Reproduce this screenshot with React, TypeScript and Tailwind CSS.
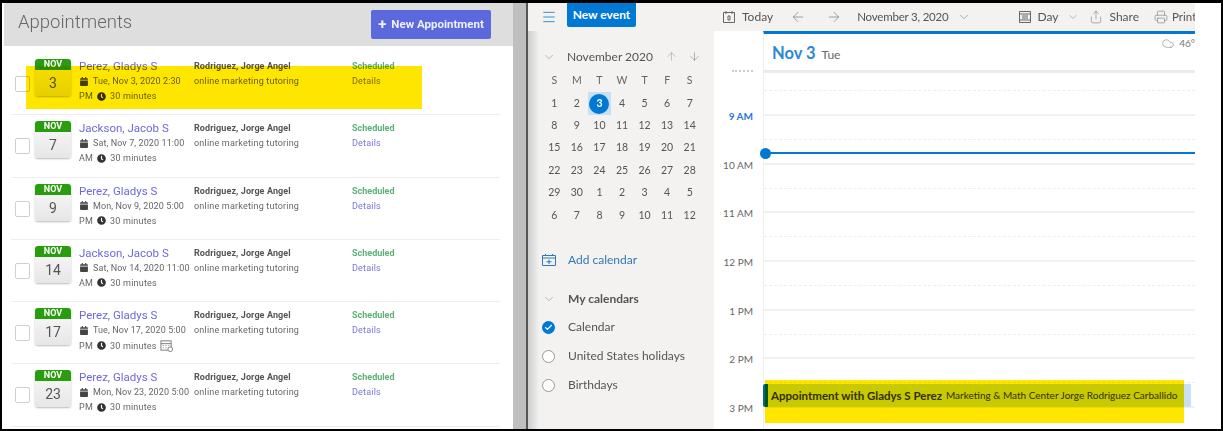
import { ArrowDown, ArrowLeft, ArrowRight, ArrowUp, Check, ChevronDown, Cloud, Menu, Printer, Share } from "lucide-react";
import { FaCalendar, FaClock } from "react-icons/fa";

const appointments = [
  { day: "3", name: "Perez, Gladys S", date: "Tue, Nov 3, 2020 2:30", ampm: "PM" },
  { day: "7", name: "Jackson, Jacob S", date: "Sat, Nov 7, 2020 11:00", ampm: "AM" },
  { day: "9", name: "Perez, Gladys S", date: "Mon, Nov 9, 2020 5:00", ampm: "PM" },
  { day: "14", name: "Jackson, Jacob S", date: "Sat, Nov 14, 2020 11:00", ampm: "AM" },
  { day: "17", name: "Perez, Gladys S", date: "Tue, Nov 17, 2020 5:00", ampm: "PM", extra: true },
  { day: "23", name: "Perez, Gladys S", date: "Mon, Nov 23, 2020 5:00", ampm: "PM" },
];

const weekDays = ["S", "M", "T", "W", "T", "F", "S"];
const monthDays = [
  1, 2, 3, 4, 5, 6, 7, 8, 9, 10, 11, 12, 13, 14, 15, 16, 17, 18, 19, 20, 21, 22, 23, 24, 25, 26, 27, 28, 29, 30, 1, 2, 3,
  4, 5, 6, 7, 8, 9, 10, 11, 12,
];
const hours = ["9 AM", "10 AM", "11 AM", "12 PM", "1 PM", "2 PM", "3 PM"];

function AppointmentRow({ a }: { a: (typeof appointments)[number] }) {
  return (
    <div className="mr-[13px] ml-[9px] flex h-[62.3px] border-b border-[#eeeeee] pt-[6px] text-[#666]">
      <div className="ml-[4px] mt-[17px] h-[16px] w-[15px] shrink-0 rounded-[2px] border border-[#cfcfcf] bg-white" />
      <div className="ml-[5px] h-[37px] w-[36px] shrink-0 overflow-hidden rounded-[3px] bg-gradient-to-b from-[#fafafa] to-[#e6e6e6] text-center shadow-[0_1px_2px_#bbb]">
        <div className="h-[11px] bg-[#2a9d0f] text-[9px] leading-[10px] font-bold text-white">NOV</div>
        <div className="mt-[4px] text-[14px] leading-[18px] text-[#555]">{a.day}</div>
      </div>
      <div className="ml-[8px] w-[115px] shrink-0">
        <div className="text-[11.500px] leading-[14px] text-[#6e68dc]">{a.name}</div>
        <div className="mt-[2px] flex items-center text-[9px] leading-[12px] tracking-[0.1px] whitespace-nowrap">
          <FaCalendar className="mr-[5px] ml-[1px] h-[9px] w-[8px] shrink-0 text-[#444]" />
          {a.date}
        </div>
        <div className="mt-[3px] flex items-center text-[9px] leading-[12px] tracking-[0.2px]">
          {a.ampm}
          <FaClock className="mx-[4px] h-[9px] w-[9px] text-[#333]" />
          30 minutes
          {a.extra && (
            <svg viewBox="0 0 14 14" className="ml-[3px] h-[13px] w-[13px] text-[#777]" fill="none" stroke="currentColor">
              <rect x="1" y="2" width="11" height="10" />
              <path d="M1 5h11M3 7h1M6 7h1M9 7h1M3 9.500h1M6 9.500h1" />
              <circle cx="11" cy="11" r="2.500" fill="#fff" />
            </svg>
          )}
        </div>
      </div>
      <div className="w-[158px] shrink-0">
        <div className="mt-[1px] text-[9px] leading-[12px] font-bold tracking-[0.1px] text-[#555]">Rodriguez, Jorge Angel</div>
        <div className="mt-[3px] text-[9px] leading-[12px] tracking-[0.2px]">online marketing tutoring</div>
      </div>
      <div>
        <div className="mt-[1px] text-[9px] leading-[12px] font-bold text-[#5cb078]">Scheduled</div>
        <div className="mt-[3px] text-[9px] leading-[12px] tracking-[0.2px] text-[#7a74dc]">Details</div>
      </div>
    </div>
  );
}

function AppointmentsPanel() {
  return (
    <div className="relative h-full w-[511px] shrink-0 bg-white font-['Roboto',sans-serif]">
      <div className="ml-[2px] flex h-[43px] items-center justify-between bg-[#dedede] pr-[22px] pl-[14px]">
        <span className="-translate-y-[2px] text-[18.500px] font-light text-[#666]">Appointments</span>
        <button className="flex h-[29px] w-[120px] items-center justify-center gap-[5px] rounded-[2px] bg-[#5b69dc] text-[11.500px] font-bold text-[#eef0ff]">
          <span className="text-[15px] leading-none">+</span>
          New Appointment
        </button>
      </div>
      <div className="pt-[7px]">
        {appointments.map((a) => (
          <AppointmentRow key={a.day} a={a} />
        ))}
      </div>
      <div className="absolute top-[63px] left-[24px] h-[43px] w-[396px] bg-[#ffe600] mix-blend-multiply" />
    </div>
  );
}

function Toolbar() {
  return (
    <div className="flex h-[28px] w-[667px] shrink-0 items-center bg-[#f3f2f1] text-[12px] text-[#555]">
      <Menu className="ml-[13px] h-[16px] w-[16px] shrink-0 text-[#0078d4]" strokeWidth={1.2} />
      <div className="ml-[10px] flex h-[24px] w-[69px] shrink-0 -translate-y-[2px] items-center justify-center rounded-b-[2px] bg-[#0078d4] font-bold text-white">
        New event
      </div>
      <div className="ml-[86px] flex shrink-0 items-center gap-[6px]">
        <svg viewBox="0 0 14 14" className="h-[14px] w-[14px] text-[#666]" fill="none" stroke="currentColor">
          <path d="M1.500 2.500h11v10h-11zM4 1v3M10 1v3M6 6h2v4H6z" />
        </svg>
        Today
      </div>
      <ArrowLeft className="ml-[17px] h-[16px] w-[16px] shrink-0 text-[#777]" strokeWidth={1} />
      <ArrowRight className="ml-[20px] h-[16px] w-[16px] shrink-0 text-[#777]" strokeWidth={1} />
      <span className="ml-[15px] text-[11.500px] tracking-[-0.2px] whitespace-nowrap">November 3, 2020</span>
      <ChevronDown className="ml-[8px] h-[14px] w-[14px] shrink-0 text-[#777]" strokeWidth={1} />
      <div className="ml-[47px] flex shrink-0 items-center gap-[6px]">
        <svg viewBox="0 0 14 14" className="h-[14px] w-[14px] text-[#666]" fill="none" stroke="currentColor">
          <path d="M1.500 1.500h11v11h-11zM1.500 4h11M1.500 10h11M4 6h6M4 8h6" />
        </svg>
        Day
        <ChevronDown className="ml-[2px] h-[12px] w-[12px] text-[#777]" strokeWidth={1} />
      </div>
      <div className="ml-[10px] flex shrink-0 items-center gap-[7px]">
        <Share className="h-[14px] w-[14px] text-[#777]" strokeWidth={1} />
        Share
      </div>
      <div className="ml-[15px] flex shrink-0 items-center gap-[4px] text-[11.500px]">
        <Printer className="h-[14px] w-[14px] shrink-0 text-[#777]" strokeWidth={1} />
        Print
      </div>
    </div>
  );
}

function CalendarItem({ label, checked }: { label: string; checked?: boolean }) {
  return (
    <div className="flex h-[29px] items-center text-[12px] text-[#555]">
      {checked ? (
        <div className="ml-[14px] flex h-[13px] w-[13px] items-center justify-center rounded-full bg-[#0078d4]">
          <Check className="h-[9px] w-[9px] text-white" strokeWidth={3} />
        </div>
      ) : (
        <div className="ml-[14px] h-[13px] w-[13px] rounded-full border border-[#999] bg-white" />
      )}
      <span className="ml-[13px]">{label}</span>
    </div>
  );
}

function Sidebar() {
  return (
    <div className="h-full w-[186px] shrink-0 bg-gradient-to-r from-[#cfcfcf] via-[#f3f2f1] via-[6%] to-[#f3f2f1] pt-[12px] text-[#555]">
      <div className="flex h-[27px] items-center pl-[14px]">
        <ChevronDown className="h-[14px] w-[14px] text-[#888]" strokeWidth={1} />
        <span className="ml-[11px] text-[12px] whitespace-nowrap">November 2020</span>
        <ArrowUp className="ml-[12px] h-[13px] w-[13px] text-[#999]" strokeWidth={1} />
        <ArrowDown className="ml-[10px] h-[13px] w-[13px] text-[#777]" strokeWidth={1} />
      </div>
      <div className="ml-[15px] grid w-[158px] grid-cols-7 text-center text-[10.500px]">
        {weekDays.map((d, i) => (
          <div key={i} className="flex h-[22.400px] items-center justify-center text-[#666]">
            {d}
          </div>
        ))}
        {monthDays.map((d, i) =>
          i === 2 ? (
            <div key={i} className="flex h-[22.400px] items-center justify-center bg-[#c7e0f4]">
              <span className="flex h-[20px] w-[20px] items-center justify-center rounded-full bg-[#0078d4] font-bold text-white">{d}</span>
            </div>
          ) : (
            <div key={i} className="flex h-[22.400px] items-center justify-center">
              {d}
            </div>
          ),
        )}
      </div>
      <div className="mt-[24px] flex items-center pl-[14px] text-[12px] text-[#2f78b8]">
        <svg viewBox="0 0 14 14" className="h-[14px] w-[14px]" fill="none" stroke="currentColor">
          <path d="M.5 2.500h13v10h-13zM.5 5h13M3.500 1v2M10.500 1v2M7 6.500v4.500M4.500 8.750h5" />
        </svg>
        <span className="ml-[12px]">Add calendar</span>
      </div>
      <div className="mt-[22px] flex h-[16px] items-center pl-[14px] text-[12px] font-bold">
        <ChevronDown className="h-[14px] w-[14px] text-[#888]" strokeWidth={1} />
        <span className="ml-[12px]">My calendars</span>
      </div>
      <div className="mt-[6px]">
        <CalendarItem label="Calendar" checked />
        <CalendarItem label="United States holidays" />
        <CalendarItem label="Birthdays" />
      </div>
    </div>
  );
}

function DayView() {
  return (
    <div className="relative h-full w-[481px] shrink-0 bg-white">
      <div className="ml-[49px] h-[39px] border-t-[3px] border-l border-[#0078d4] border-l-[#eee] pl-[8px]">
        <div className="flex items-baseline pt-[7px]">
          <span className="text-[16.500px] leading-[24px] font-bold text-[#2b88d8]">Nov 3</span>
          <span className="ml-[6px] text-[12px] text-[#666]">Tue</span>
          <span className="ml-auto flex -translate-y-[9px] items-center gap-[4px] overflow-hidden text-[10px] text-[#777]">
            <Cloud className="h-[13px] w-[14px]" strokeWidth={1} />
            46°
          </span>
        </div>
      </div>
      <div className="flex h-[3px]">
        <div className="ml-[18px] h-[2px] w-[21px] border-t-2 border-dotted border-[#ccc]" />
        <div className="ml-[10px] h-full grow bg-[#edebe9]" />
      </div>
      <div className="flex h-[356px]">
        <div className="w-[39px] shrink-0 text-right text-[10px] text-[#666]">
          {hours.map((h, i) => (
            <div
              key={h}
              className={`flex items-end leading-[14px] ${i === 0 ? "h-[43px] font-bold text-[#2b78d8]" : "h-[48.700px]"}`}
            >
              <span className="w-full translate-y-[7px]">{h}</span>
            </div>
          ))}
        </div>
        <div className="ml-[10px] grow border-l border-[#eee]">
          {hours.map((h, i) => (
            <div key={h} className={`border-b-2 border-[#f1f1f1] ${i === 0 ? "h-[43px]" : "h-[48.700px]"}`}>
              <div className={`border-b border-dashed border-[#eeeeee] ${i === 0 ? "h-[18px]" : "h-[24px]"}`} />
            </div>
          ))}
        </div>
      </div>
      <div className="absolute top-[117px] left-[46px] h-[11px] w-[11px] rounded-full bg-[#0078d4]" />
      <div className="absolute top-[121px] left-[50px] h-[2px] w-[431px] bg-[#0078d4]" />
      <div className="absolute top-[353px] left-[49px] flex h-[23px] w-[428px] items-center overflow-hidden rounded-l-[2px] border-l-[5px] border-[#0063a8] bg-[#c7e0f4] pl-[3px] whitespace-nowrap text-[#333]">
        <span className="text-[11.500px] font-bold">Appointment with Gladys S Perez</span>
        <span className="ml-[4px] text-[10px]">Marketing &amp; Math Center Jorge Rodriguez Carballido</span>
      </div>
      <div className="absolute top-[349px] left-[51px] h-[43px] w-[419px] bg-[#ffe600] mix-blend-multiply" />
    </div>
  );
}

function OutlookPanel() {
  return (
    <div className="flex h-full w-[667px] shrink-0 flex-col overflow-hidden font-['Lato',sans-serif]">
      <Toolbar />
      <div className="flex h-[398px]">
        <Sidebar />
        <DayView />
      </div>
    </div>
  );
}

export default function App() {
  return (
    <div className="h-[431px] w-[1223px] overflow-hidden bg-white blur-[0.4px]">
      <div className="flex h-full border-x-2 border-t-[3px] border-b-2 border-black">
        <AppointmentsPanel />
        <div className="h-full w-[15px] shrink-0 border-r-2 border-[#555] bg-[#bfbfbf]" />
        <OutlookPanel />
      </div>
    </div>
  );
}
